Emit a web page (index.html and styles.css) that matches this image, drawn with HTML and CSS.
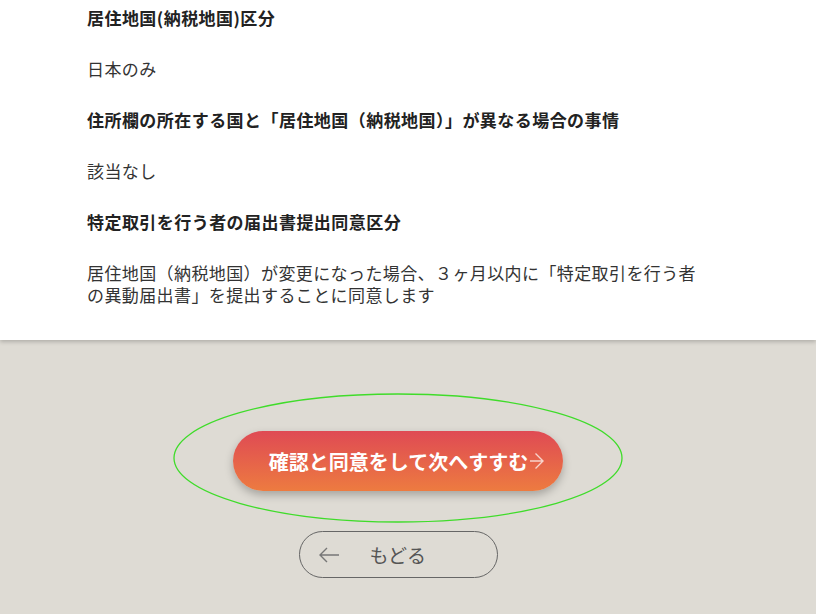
FILE: index.html
```html
<!DOCTYPE html>
<html lang="ja">
<head>
    <meta charset="UTF-8">
    <meta name="viewport" content="width=device-width, initial-scale=1.0">
    <link rel="stylesheet" href="styles.css">
</head>
<body>
    <div class="panel">
        <dl class="info-list">
            <dt>居住地国(納税地国)区分</dt>
            <dd>日本のみ</dd>
            <dt>住所欄の所在する国と「居住地国（納税地国）」が異なる場合の事情</dt>
            <dd>該当なし</dd>
            <dt>特定取引を行う者の届出書提出同意区分</dt>
            <dd>居住地国（納税地国）が変更になった場合、３ヶ月以内に「特定取引を行う者の異動届出書」を提出することに同意します</dd>
        </dl>
    </div>

    <div class="actions">
        <div class="next-wrap">
            <!-- 注目マーク -->
            <svg class="focus-ring" width="452" height="132" viewBox="0 0 452 132">
                <ellipse cx="226" cy="66" rx="224" ry="64" fill="none" stroke="#3fdc2a" stroke-width="1.3"/>
            </svg>
            <button class="next-btn">
                確認と同意をして次へすすむ
                <svg class="arrow" width="14" height="18" viewBox="0 0 14 18">
                    <path d="M0 9 H13 M5.5 1.5 L13 9 L5.5 16.5" fill="none" stroke="#f7d4cc" stroke-width="1.4"/>
                </svg>
            </button>
        </div>
        <button class="back-btn">
            <svg class="back-arrow" width="20" height="16" viewBox="0 0 20 16">
                <path d="M20 8 H1 M8 1 L1 8 L8 15" fill="none" stroke="#777" stroke-width="1.4"/>
            </svg>
            もどる
        </button>
    </div>
</body>
</html>
```

FILE: styles.css
```css
body {
    margin: 0;
    background-color: #dedbd4;
    font-family: "Noto Sans CJK JP", "Noto Sans", sans-serif;
    color: #333;
}

.panel {
    background-color: #fff;
    padding: 7px 0 34px 87px;
    box-shadow: 0 2px 4px rgba(0,0,0,0.2);
}

.info-list {
    margin: 0;
    width: 616px;
    font-size: 17px;
    line-height: 22px;
}

.info-list dt {
    font-weight: bold;
    color: #222;
    letter-spacing: 0.45px;
    margin-bottom: 29px;
}

.info-list dd {
    margin: 0 0 29px 0;
    letter-spacing: 0.4px;
}

.info-list dd:last-child {
    margin-bottom: 0;
}

.actions {
    display: flex;
    flex-direction: column;
    align-items: center;
    padding: 91px 20px 0 0;
    gap: 40px;
}

.next-wrap {
    position: relative;
}

.focus-ring {
    position: absolute;
    left: -61px;
    top: -39px;
    pointer-events: none;
}

.next-btn {
    display: flex;
    align-items: center;
    justify-content: center;
    gap: 2px;
    width: 330px;
    height: 60px;
    padding: 0 0 0 17px;
    border: none;
    border-radius: 30px;
    background: linear-gradient(180deg, #df4a54, #ed7b40);
    color: #fff;
    font-family: inherit;
    font-size: 20px;
    font-weight: bold;
    box-shadow: 0 4px 8px rgba(0,0,0,0.25);
    cursor: pointer;
}

.back-btn {
    display: flex;
    align-items: center;
    width: 199px;
    height: 47px;
    padding: 0 0 0 19px;
    border: 1px solid #666;
    border-radius: 24px;
    background: transparent;
    color: #555;
    font-family: inherit;
    font-size: 19px;
    cursor: pointer;
}

.back-arrow {
    margin-right: 31px;
}
```
